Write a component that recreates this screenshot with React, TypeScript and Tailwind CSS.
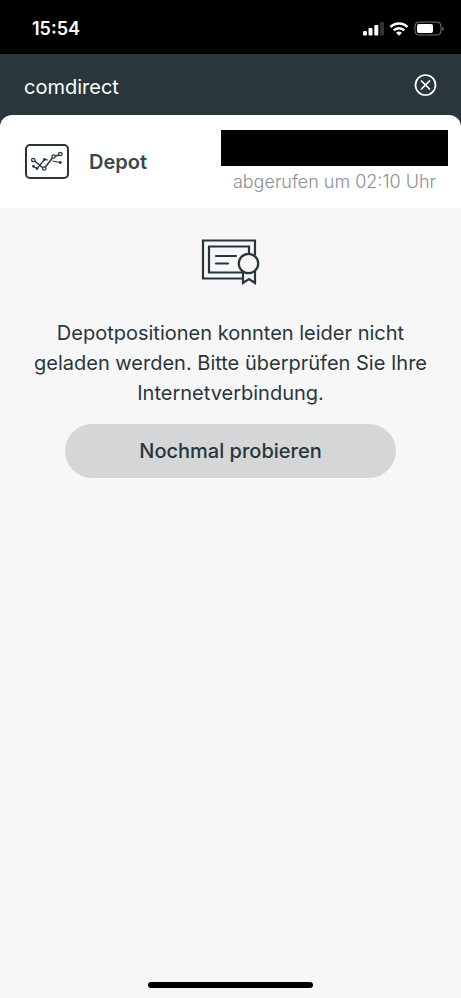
import React from "react";

const DepotIcon: React.FC = () => (
  <svg
    width="44"
    height="36"
    viewBox="0 0 44 36"
    fill="none"
    stroke="#28363c"
    aria-hidden="true"
  >
    <rect x="1" y="1" width="42" height="33" rx="4" strokeWidth="2" />
    <path d="M9 16.5 18 24M20 23.5 27.4 14M30 12.3 34 11" strokeWidth="1.5" />
    <path d="M8.5 22.5 12 24.5M13 23.5 19.5 15.5M20 15.5 23 16M27.5 17 35 18.5" strokeWidth="1.2" />
    <g fill="#fff" strokeWidth="1.3">
      <circle cx="8.3" cy="16" r="1.7" />
      <circle cx="19.3" cy="24.5" r="1.7" />
      <circle cx="28.6" cy="12.5" r="1.7" />
      <circle cx="35.3" cy="10" r="1.7" />
    </g>
    <g fill="#28363c" stroke="none">
      <circle cx="8.5" cy="22.3" r="1.4" />
      <circle cx="12" cy="24.5" r="1.4" />
      <circle cx="19.5" cy="15.5" r="1.4" />
      <circle cx="35.3" cy="18.5" r="1.4" />
    </g>
  </svg>
);

const CertificateIcon: React.FC = () => (
  <svg
    width="60"
    height="48"
    viewBox="0 0 60 48"
    fill="none"
    stroke="#28363c"
    strokeWidth="2.2"
    aria-hidden="true"
  >
    <path d="M54 17V2.5H2V40.5H42" />
    <path d="M48 15V8.500H8V34.500H41" />
    <path d="M15 18H35M15 25.500H27" strokeLinecap="round" />
    <path d="M42 33V45L48 41L54 45V33" />
    <circle cx="47.5" cy="25.500" r="9.700" />
  </svg>
);

const StatusBar: React.FC = () => (
  <div className="flex h-[54px] items-center justify-between bg-black pr-4 pl-8 text-white">
    <time className="pt-1 text-lg font-semibold">15:54</time>
    <div className="flex items-center gap-1 pt-1">
      <svg width="24" height="14" viewBox="0 0 24 14" fill="#fff" aria-hidden="true">
        <rect x="2" y="9" width="4" height="4.5" rx="1" />
        <rect x="7.5" y="6" width="4" height="7.5" rx="1" />
        <rect x="13.3" y="3" width="4" height="10.5" rx="1" />
        <rect x="19" y="0" width="4" height="13.5" rx="1" fillOpacity="0.2" />
      </svg>
      <svg width="20" height="14" viewBox="0 0 20 14" fill="none" stroke="#fff" aria-hidden="true">
        <path d="M1.5 5A12 12 0 0 1 18.5 5" strokeWidth="2.6" />
        <path d="M4.7 8.4A7.5 7.5 0 0 1 15.3 8.4" strokeWidth="2.4" />
        <path d="M7 10.8A4.5 4.5 0 0 1 13 10.8L10 13.8Z" fill="#fff" stroke="none" />
      </svg>
      <svg width="32" height="16" viewBox="0 0 32 16" fill="#fff" aria-hidden="true">
        <rect x="2" y="1" width="26" height="13" rx="4" fill="none" stroke="#fff" strokeOpacity="0.45" />
        <rect x="4" y="3" width="16" height="9" rx="2" />
        <path d="M29.5 5.5V10C31 9.5 31 6 29.5 5.5Z" fillOpacity="0.5" />
      </svg>
    </div>
  </div>
);

const App: React.FC = () => {
  return (
    <div className="flex min-h-screen flex-col bg-[#f7f7f8] font-[Inter,sans-serif] text-[#28363c]">
      <StatusBar />

      <div className="bg-[#29363c]">
        <header className="flex h-[61px] items-center justify-between px-6 text-white">
          <h1 className="pt-1 text-xl">comdirect</h1>
          <button type="button" aria-label="Schließen">
            <svg width="24" height="24" viewBox="0 0 24 24" fill="none" stroke="#fff" aria-hidden="true">
              <circle cx="12.5" cy="12" r="10" strokeWidth="1.7" />
              <path d="M8.5 8L16.5 16M16.5 8L8.5 16" strokeWidth="1.7" strokeLinecap="round" />
            </svg>
          </button>
        </header>

        <section className="flex h-[93px] items-center rounded-t-xl bg-white pr-[13px] pl-[25px]">
          <DepotIcon />
          <h2 className="ml-5 text-xl font-semibold text-[#3a464c]">Depot</h2>
          <div className="ml-auto w-[227px]">
            {/* Balance is blacked out */}
            <div className="h-9 bg-black" />
            <p className="pt-1 pr-3 text-right text-lg leading-6 font-light text-[#8b9094]">
              abgerufen um 02:10 Uhr
            </p>
          </div>
        </section>
      </div>

      <main className="flex grow flex-col items-center px-6 pt-[30px]">
        <CertificateIcon />
        <p className="mt-8 text-center text-xl leading-[30px]">
          Depotpositionen konnten leider nicht geladen werden. Bitte überprüfen
          Sie Ihre Internetverbindung.
        </p>
        <button
          type="button"
          className="mt-4 h-[54px] w-4/5 rounded-full bg-[#d4d6d8] text-xl font-medium"
        >
          Nochmal probieren
        </button>
      </main>

      <div className="mx-auto mb-[10px] h-[6px] w-[165px] rounded-full bg-black" />
    </div>
  );
};

export default App;
